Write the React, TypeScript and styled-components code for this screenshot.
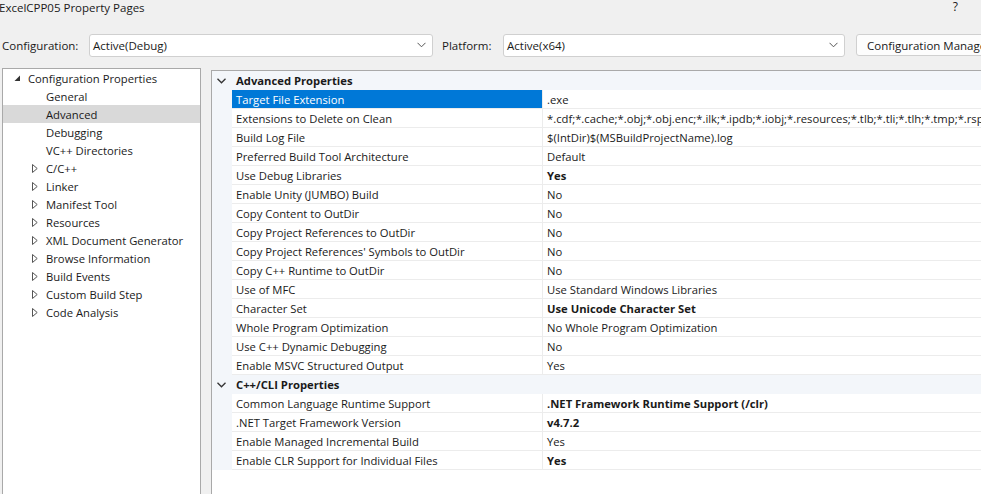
import React from "react";
import styled, { createGlobalStyle } from "styled-components";

const Global = createGlobalStyle`
  html, body { margin: 0; padding: 0; background: #f0f0f0; }
  body { font-family: "Open Sans", "Noto Sans", sans-serif; font-size: 11.25px; color: #1a1a1a; }
  * { box-sizing: border-box; }
`;

const Window = styled.div`
  width: 981px;
  height: 494px;
  overflow: hidden;
  background: #f0f0f0;
  display: flex;
  flex-direction: column;
`;

const TitleBar = styled.div`
  height: 33px;
  display: flex;
  align-items: flex-start;
  justify-content: space-between;
  padding: 0 23px 0 0;
`;

const TitleText = styled.div`
  margin-left: -1px;
  line-height: 15px;
  font-size: 11.5px;
`;

const Help = styled.div`
  line-height: 15px;
  margin-top: -1px;
  font-size: 12px;
`;

const Toolbar = styled.div`
  height: 24px;
  display: flex;
  align-items: center;
  padding-left: 2px;
`;

const Label = styled.div<{ $w: number; $pad?: number }>`
  width: ${(p) => p.$w}px;
  padding-left: ${(p) => p.$pad ?? 0}px;
  flex-shrink: 0;
  font-size: 11.5px;
`;

const Select = styled.div<{ $w: number }>`
  width: ${(p) => p.$w}px;
  height: 23px;
  flex-shrink: 0;
  background: #fff;
  border: 1px solid #d0d0d0;
  border-radius: 3px;
  display: flex;
  align-items: center;
  justify-content: space-between;
  padding: 0 6px 0 3px;
  font-size: 11.5px;
`;

const Button = styled.div`
  margin-left: 11px;
  width: 150px;
  flex-shrink: 0;
  height: 22px;
  background: #fdfdfd;
  border: 1px solid #d0d0d0;
  border-radius: 3px;
  display: flex;
  align-items: center;
  padding-left: 10px;
  white-space: nowrap;
  overflow: hidden;
  font-size: 11.5px;
`;

const Body = styled.div`
  margin-top: 11px;
  flex: 1;
  display: flex;
  padding-left: 2px;
  min-height: 0;
`;

const Tree = styled.div`
  width: 199px;
  flex-shrink: 0;
  background: #fff;
  border: 1px solid #a9a9a9;
  border-bottom: none;
`;

const TreeRow = styled.div<{ $indent: number; $selected?: boolean }>`
  height: 18px;
  display: flex;
  align-items: center;
  padding-left: ${(p) => p.$indent}px;
  background: ${(p) => (p.$selected ? "#d9d9d9" : "transparent")};
  white-space: nowrap;
`;

const Expander = styled.span`
  width: 14px;
  display: inline-flex;
  align-items: center;
  flex-shrink: 0;
`;

const GridPanel = styled.div`
  margin: 2px 0 0 10px;
  flex: 1;
  background: #fff;
  border-left: 1px solid #a9a9a9;
  border-top: 1px solid #a9a9a9;
  min-width: 0;
  overflow: hidden;
`;

const GroupHeader = styled.div`
  height: 19px;
  display: flex;
  align-items: center;
  background: #f3f6fa;
  font-weight: 700;
  white-space: nowrap;
`;

const GroupChevron = styled.span`
  width: 24px;
  padding-left: 5px;
  display: inline-flex;
  align-items: center;
`;

const Row = styled.div`
  height: 19px;
  display: flex;
  white-space: nowrap;
`;

const Gutter = styled.div`
  width: 20px;
  flex-shrink: 0;
  background: #f3f6fa;
`;

const NameCell = styled.div<{ $selected?: boolean }>`
  width: 311px;
  flex-shrink: 0;
  padding-left: 4px;
  display: flex;
  align-items: center;
  border-bottom: 1px solid #ececec;
  border-right: 1px solid #ececec;
  background: ${(p) => (p.$selected ? "#0078d7" : "#fff")};
  color: ${(p) => (p.$selected ? "#fff" : "#1a1a1a")};
`;

const ValueCell = styled.div<{ $bold?: boolean }>`
  flex: 1;
  min-width: 0;
  padding-left: 4px;
  display: flex;
  align-items: center;
  overflow: hidden;
  border-bottom: 1px solid #ececec;
  font-weight: ${(p) => (p.$bold ? 700 : 400)};
`;

const Chevron = () => (
  <svg width="9" height="6" viewBox="0 0 9 6">
    <polyline points="0.5,0.8 4.5,4.8 8.5,0.8" fill="none" stroke="#555" strokeWidth="1" />
  </svg>
);

const GroupChev = () => (
  <svg width="9" height="6" viewBox="0 0 9 6">
    <polyline points="0.5,0.8 4.5,4.8 8.5,0.8" fill="none" stroke="#333" strokeWidth="1.3" />
  </svg>
);

const Expanded = () => (
  <svg width="7" height="7" viewBox="0 0 7 7">
    <polygon points="6,0.5 6,6 0.5,6" fill="#333" />
  </svg>
);

const Collapsed = () => (
  <svg width="6" height="9" viewBox="0 0 6 9">
    <polygon points="0.5,0.5 5.2,4.5 0.5,8.5" fill="none" stroke="#555" strokeWidth="1" />
  </svg>
);

type Prop = { name: string; value: string; bold?: boolean; selected?: boolean };

const advanced: Prop[] = [
  { name: "Target File Extension", value: ".exe", selected: true },
  {
    name: "Extensions to Delete on Clean",
    value:
      "*.cdf;*.cache;*.obj;*.obj.enc;*.ilk;*.ipdb;*.iobj;*.resources;*.tlb;*.tli;*.tlh;*.tmp;*.rsp;*.pgc;*.pgd;*.meta;*.tlog;*.manifest;*.res;*.pch;*.exp;*.idb;*.rep;*.xdc;*.pdb",
  },
  { name: "Build Log File", value: "$(IntDir)$(MSBuildProjectName).log" },
  { name: "Preferred Build Tool Architecture", value: "Default" },
  { name: "Use Debug Libraries", value: "Yes", bold: true },
  { name: "Enable Unity (JUMBO) Build", value: "No" },
  { name: "Copy Content to OutDir", value: "No" },
  { name: "Copy Project References to OutDir", value: "No" },
  { name: "Copy Project References' Symbols to OutDir", value: "No" },
  { name: "Copy C++ Runtime to OutDir", value: "No" },
  { name: "Use of MFC", value: "Use Standard Windows Libraries" },
  { name: "Character Set", value: "Use Unicode Character Set", bold: true },
  { name: "Whole Program Optimization", value: "No Whole Program Optimization" },
  { name: "Use C++ Dynamic Debugging", value: "No" },
  { name: "Enable MSVC Structured Output", value: "Yes" },
];

const cli: Prop[] = [
  { name: "Common Language Runtime Support", value: ".NET Framework Runtime Support (/clr)", bold: true },
  { name: ".NET Target Framework Version", value: "v4.7.2", bold: true },
  { name: "Enable Managed Incremental Build", value: "Yes" },
  { name: "Enable CLR Support for Individual Files", value: "Yes", bold: true },
];

const leaves = ["General", "Advanced", "Debugging", "VC++ Directories"];
const branches = [
  "C/C++",
  "Linker",
  "Manifest Tool",
  "Resources",
  "XML Document Generator",
  "Browse Information",
  "Build Events",
  "Custom Build Step",
  "Code Analysis",
];

const Group = ({ title, items }: { title: string; items: Prop[] }) => (
  <>
    <GroupHeader>
      <GroupChevron>
        <GroupChev />
      </GroupChevron>
      {title}
    </GroupHeader>
    {items.map((p) => (
      <Row key={p.name}>
        <Gutter />
        <NameCell $selected={p.selected}>{p.name}</NameCell>
        <ValueCell $bold={p.bold}>{p.value}</ValueCell>
      </Row>
    ))}
  </>
);

export default function App() {
  return (
    <>
      <Global />
      <Window>
        <TitleBar>
          <TitleText>ExcelCPP05 Property Pages</TitleText>
          <Help>?</Help>
        </TitleBar>
        <Toolbar>
          <Label $w={87}>Configuration:</Label>
          <Select $w={344}>
            <span>Active(Debug)</span>
            <Chevron />
          </Select>
          <Label $w={70} $pad={9}>Platform:</Label>
          <Select $w={342}>
            <span>Active(x64)</span>
            <Chevron />
          </Select>
          <Button>Configuration Manager...</Button>
        </Toolbar>
        <Body>
          <Tree>
            <TreeRow $indent={11}>
              <Expander>
                <Expanded />
              </Expander>
              Configuration Properties
            </TreeRow>
            {leaves.map((l) => (
              <TreeRow key={l} $indent={43} $selected={l === "Advanced"}>
                {l}
              </TreeRow>
            ))}
            {branches.map((b) => (
              <TreeRow key={b} $indent={29}>
                <Expander>
                  <Collapsed />
                </Expander>
                {b}
              </TreeRow>
            ))}
          </Tree>
          <GridPanel>
            <Group title="Advanced Properties" items={advanced} />
            <Group title="C++/CLI Properties" items={cli} />
          </GridPanel>
        </Body>
      </Window>
    </>
  );
}
